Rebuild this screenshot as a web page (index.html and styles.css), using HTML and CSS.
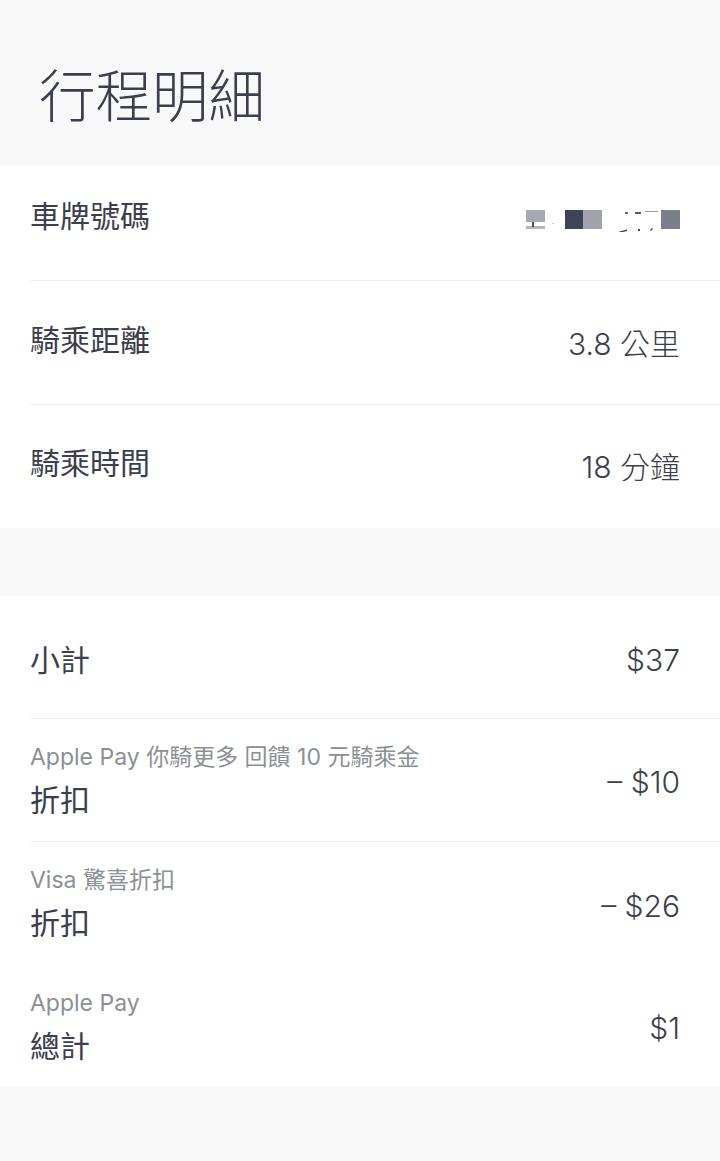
FILE: index.html
```html
<!DOCTYPE html>
<html lang="zh-Hant">
<head>
<meta charset="utf-8">
<title>行程明細</title>
<link rel="stylesheet" href="styles.css">
</head>
<body>
<header class="header">
  <h1 class="title">行程明細</h1>
</header>

<section class="section">
  <div class="row row-plate">
    <span class="label">車牌號碼</span>
    <span class="value value-low">
      <svg class="plate" width="154" height="24" viewBox="0 0 154 24" aria-label="車牌號碼（已遮蔽）">
        <rect x="0" y="2" width="19" height="12" fill="#a6a9b0"/>
        <rect x="0" y="18" width="19" height="3" fill="#b3b5ba"/>
        <rect x="6" y="14" width="2" height="5" fill="#4a4d57"/>
        <rect x="26" y="15" width="2" height="1" fill="#c8c9cd"/>
        <rect x="39" y="2" width="18" height="19" fill="#3e4358"/>
        <rect x="57" y="2" width="19" height="19" fill="#a0a3ac"/>
        <rect x="99" y="4" width="3" height="2" fill="#666a72"/>
        <rect x="109" y="4" width="6" height="2" fill="#555861"/>
        <rect x="119" y="3" width="13" height="1" fill="#9a9ca3"/>
        <path d="M92 24 L101 21.5 L101 23 L92 25 Z" fill="#33363f"/>
        <rect x="112" y="21" width="2" height="2" fill="#44474f"/>
        <path d="M124 22 L126 20 L127 21 L125 23 Z" fill="#44474f"/>
        <rect x="135" y="2" width="19" height="19" fill="#7b7e8b"/>
      </svg>
    </span>
  </div>
  <div class="row row-dist">
    <span class="label">騎乘距離</span>
    <span class="value value-low">3.8 公里</span>
  </div>
  <div class="row row-time row-last">
    <span class="label">騎乘時間</span>
    <span class="value value-low">18 分鐘</span>
  </div>
</section>

<div class="gap"></div>

<section class="section">
  <div class="row row-subtotal">
    <span class="label">小計</span>
    <span class="value">$37</span>
  </div>
  <div class="row row-two">
    <div class="label-stack">
      <span class="note">Apple Pay 你騎更多 回饋 10 元騎乘金</span>
      <span class="label">折扣</span>
    </div>
    <span class="value value-mid">– $10</span>
  </div>
  <div class="row row-two row-last">
    <div class="label-stack">
      <span class="note">Visa 驚喜折扣</span>
      <span class="label">折扣</span>
    </div>
    <span class="value value-mid">– $26</span>
  </div>
  <div class="row row-two row-end row-last">
    <div class="label-stack">
      <span class="note">Apple Pay</span>
      <span class="label">總計</span>
    </div>
    <span class="value value-mid">$1</span>
  </div>
</section>
</body>
</html>
```

FILE: styles.css
```css
* {
  box-sizing: border-box;
}

body {
  margin: 0;
  background: #f8f8f8;
  font-family: Inter, "Noto Sans CJK TC", sans-serif;
  font-weight: 400;
  color: #3b3e4b;
}

.header {
  height: 166px;
  padding: 69px 0 0 39px;
}

.title {
  margin: 0;
  font-size: 56.5px;
  font-weight: 300;
  line-height: 56px;
}

.section {
  background: #ffffff;
}

.gap {
  height: 68px;
}

.row {
  display: flex;
  justify-content: space-between;
  align-items: center;
  margin-left: 30px;
  padding-right: 40px;
  border-bottom: 1px solid #f1f1f3;
}

.row-last {
  border-bottom: none;
}

.row-plate {
  height: 115px;
  padding-bottom: 14px;
}

.row-dist {
  height: 124px;
  padding-bottom: 5px;
}

.row-time {
  height: 123px;
  padding-bottom: 7px;
}

.row-subtotal {
  height: 123px;
  padding-top: 6px;
}

.row-two {
  height: 123px;
}

.row-end {
  height: 122px;
}

.label {
  font-size: 30px;
  line-height: 40px;
}

.value {
  font-size: 30px;
  line-height: 40px;
  font-weight: 300;
}

.value-low {
  padding-top: 8px;
}

.value-mid {
  padding-top: 4px;
}

.plate {
  display: block;
}

.label-stack {
  display: flex;
  flex-direction: column;
  gap: 7px;
}

.note {
  font-size: 23px;
  line-height: 32px;
  color: #8a9095;
}
```
